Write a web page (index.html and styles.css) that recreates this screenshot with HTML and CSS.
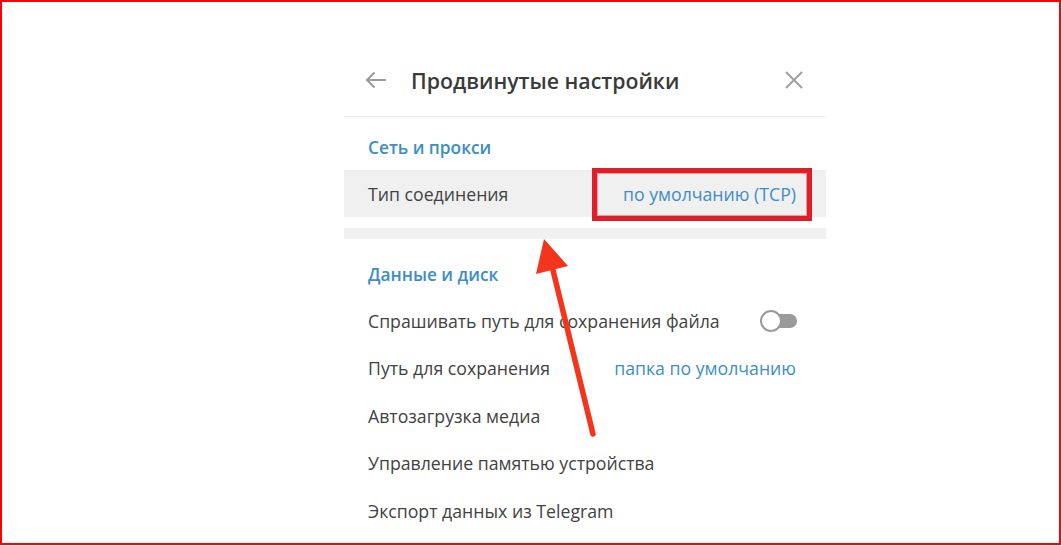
FILE: index.html
```html
<!DOCTYPE html>
<html lang="ru">
<head>
<meta charset="utf-8">
<link rel="stylesheet" href="styles.css">
</head>
<body>
<div class="frame">
  <div class="panel">
    <div class="header">
      <svg class="icon-back" width="22" height="18" viewBox="0 0 22 18">
        <path d="M21 9H2M9.5 1.5L2 9l7.5 7.5" fill="none" stroke="#9a9a9a" stroke-width="2"/>
      </svg>
      <div class="title">Продвинутые настройки</div>
      <svg class="icon-close" width="20" height="20" viewBox="0 0 20 20">
        <path d="M2 2L18 18M18 2L2 18" fill="none" stroke="#a0a0a0" stroke-width="2"/>
      </svg>
    </div>
    <div class="section-title first">Сеть и прокси</div>
    <div class="row hover">
      <span class="label">Тип соединения</span>
      <span class="value highlighted">по умолчанию (TCP)</span>
    </div>
    <div class="divider"></div>
    <div class="section-title">Данные и диск</div>
    <div class="row">
      <span class="label">Спрашивать путь для сохранения файла</span>
      <span class="toggle"><span class="knob"></span></span>
    </div>
    <div class="row">
      <span class="label">Путь для сохранения</span>
      <span class="value">папка по умолчанию</span>
    </div>
    <div class="row"><span class="label">Автозагрузка медиа</span></div>
    <div class="row"><span class="label">Управление памятью устройства</span></div>
    <div class="row"><span class="label">Экспорт данных из Telegram</span></div>
  </div>
  <svg class="arrow" width="1061" height="545" viewBox="0 0 1061 545">
    <line x1="593" y1="434" x2="551" y2="262" stroke="#f2351b" stroke-width="5.5" stroke-linecap="round"/>
    <polygon points="544,239 536,274 568,266" fill="#f2351b"/>
  </svg>
</div>
</body>
</html>
```
FILE: styles.css
```css
html, body {
  margin: 0;
  padding: 0;
  background: #fff;
}
body {
  font-family: "Open Sans", "Noto Sans", sans-serif;
}
.frame {
  position: relative;
  width: 1061px;
  height: 545px;
  box-sizing: border-box;
  border: 2px solid #ff0000;
  padding: 42px 0 0 342px;
  overflow: hidden;
}
.panel {
  width: 482px;
}
.header {
  display: flex;
  align-items: center;
  height: 72px;
  border-bottom: 1px solid #ececec;
  padding: 0 22px 0 21px;
}
.icon-back {
  flex: none;
  margin-right: 24px;
}
.title {
  flex: 1;
  font-size: 21.3px;
  font-weight: 600;
  color: #3a3a3a;
}
.icon-close {
  flex: none;
}
.section-title {
  color: #3d8ec4;
  font-size: 17.3px;
  font-weight: 600;
  line-height: 22px;
  padding: 25px 24px 11px;
}
.section-title.first {
  padding-top: 20px;
  padding-bottom: 11px;
}
.row {
  display: flex;
  align-items: center;
  justify-content: space-between;
  height: 47.5px;
  padding: 0 30px 0 24px;
  font-size: 17.7px;
  color: #424242;
}
.row.hover {
  height: 47px;
  background: #f0f0f0;
}
.value {
  color: #3d8ec4;
}
.highlighted {
  position: relative;
}
.highlighted::after {
  content: "";
  position: absolute;
  left: -31px;
  right: -16px;
  top: -14px;
  bottom: -15px;
  border: 5px solid #de1f28;
  box-shadow: inset 0 0 0 1px #f19a9e;
}
.divider {
  height: 11px;
  margin-top: 11px;
  background: #f1f1f1;
}
.toggle {
  position: relative;
  width: 36px;
  height: 14px;
  border-radius: 7px;
  background: #9a9a9a;
  margin-right: -1px;
}
.knob {
  position: absolute;
  left: -1px;
  top: -4px;
  width: 18px;
  height: 18px;
  border: 2px solid #9a9a9a;
  border-radius: 50%;
  background: #fff;
}
.arrow {
  position: absolute;
  left: -2px;
  top: -2px;
  pointer-events: none;
}
```
